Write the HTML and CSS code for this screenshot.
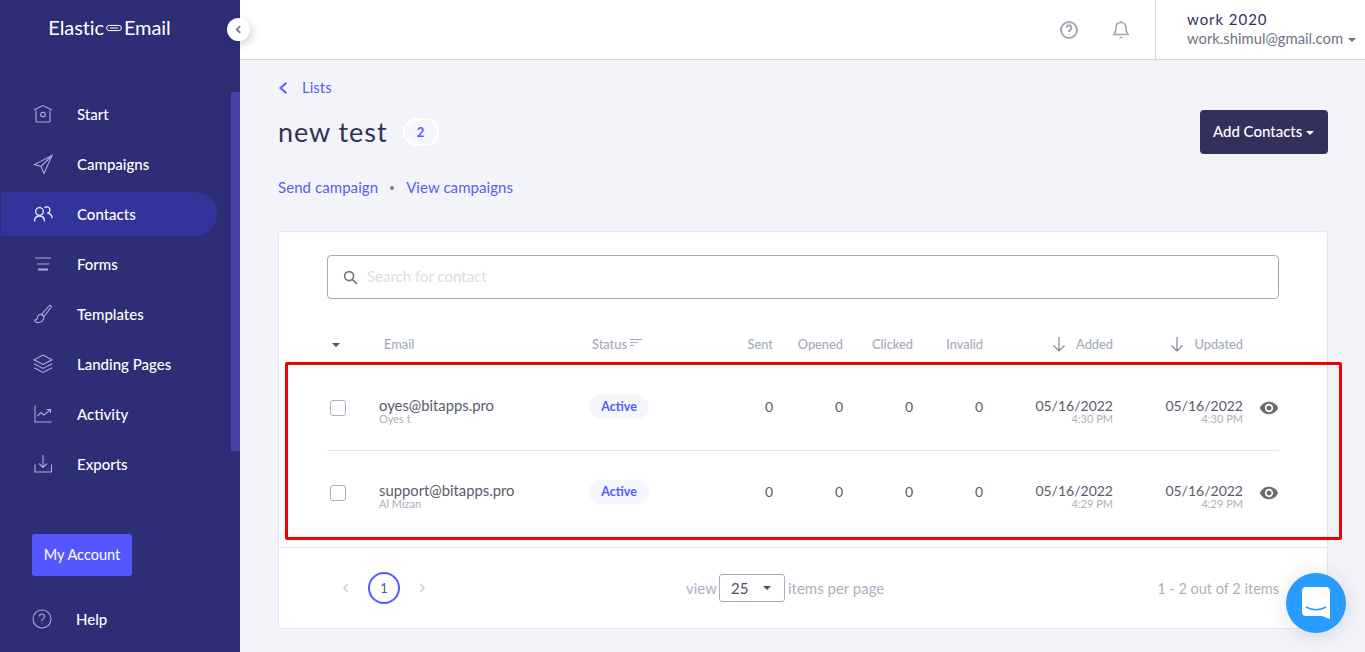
FILE: index.html
```html
<!DOCTYPE html>
<html>
<head>
    <title>new test - Contacts</title>
    <link rel="stylesheet" href="styles.css">
</head>
<body>

<aside class="sidebar">
    <div class="logo">Elastic<svg class="logo-mark" viewBox="0 0 16 8"><rect x="0.6" y="1.4" width="14.8" height="5.2" rx="2.6"/><path d="M4 4h8"/></svg>Email</div>
    <button class="collapse"><svg viewBox="0 0 10 10"><path d="M6.5 2 3.5 5l3 3"/></svg></button>
    <div class="side-scroll"></div>

    <nav class="nav">
        <a class="nav-item"><svg class="nav-icon" viewBox="0 0 20 20"><path d="M1 6 10 1.5 19 6"/><path d="M3 6.5V17a1 1 0 0 0 1 1h12a1 1 0 0 0 1-1V6.5"/><circle cx="10" cy="10.5" r="2.3"/></svg>Start</a>
        <a class="nav-item"><svg class="nav-icon" viewBox="0 0 20 20"><path d="M19 1.5 1.5 10.5 8 12.5 11 19.5Z"/><path d="M19 1.5 8 12.5"/></svg>Campaigns</a>
        <a class="nav-item active"><svg class="nav-icon" viewBox="0 0 20 20"><circle cx="6.500" cy="7.500" r="3.800"/><path d="M1.500 17.500c0-3.500 2-5.500 5-5.500s5 2 5 5.500"/><path d="M11.500 3.800a3.200 3.200 0 1 1 2.800 5.400c2.800.2 4.700 2.100 4.700 5.100"/></svg>Contacts</a>
        <a class="nav-item"><svg class="nav-icon" viewBox="0 0 20 20"><path d="M2 4h16M4 10h12"/><path class="thick" d="M5 15.500h10"/></svg>Forms</a>
        <a class="nav-item"><svg class="nav-icon" viewBox="0 0 20 20"><path d="M16.500 1.500c1-.6 2.300.6 1.700 1.700L11 12.500 8.500 10.500Z"/><path d="M8.500 10.500c-2-.5-4 .8-4 2.800 0 1.700-1.300 2.700-3 3 1 2 3.500 2.700 6 1.700 2-.8 3.500-2.700 3.500-5.500Z"/></svg>Templates</a>
        <a class="nav-item"><svg class="nav-icon" viewBox="0 0 20 20"><path d="M10 1 19 5.800 10 10.500 1 5.800Z"/><path d="M1 9.800 10 14.500 19 9.800"/><path d="M1 13.800 10 18.500 19 13.800"/></svg>Landing Pages</a>
        <a class="nav-item"><svg class="nav-icon" viewBox="0 0 20 20"><path d="M2 1.500V18h16.500"/><path d="M4.500 12 8 8.500l3 2.500 6-5"/><path d="M13.500 5.500H17.500V9"/></svg>Activity</a>
        <a class="nav-item"><svg class="nav-icon" viewBox="0 0 20 20"><path d="M10 1v12.500M6 9.500l4 4 4-4"/><path d="M2 10.500V18h16.500v-7.500"/></svg>Exports</a>
    </nav>

    <a class="account-btn">My Account</a>

    <a class="nav-item help"><svg class="nav-icon" viewBox="0 0 20 20"><circle cx="10" cy="10" r="9"/><path d="M7.500 7.500a2.500 2.500 0 1 1 3.800 2.100c-.8.500-1.300 1-1.300 2v.6"/><path d="M10 14.300v.5"/></svg>Help</a>
</aside>

<div class="main">
    <header class="topbar">
        <svg class="top-icon" viewBox="0 0 20 20"><circle cx="10" cy="10" r="8"/><path d="M7.600 7.800a2.400 2.400 0 1 1 3.700 2c-.8.500-1.300.9-1.300 1.800v.3"/><path d="M10 14.100v.5"/></svg>
        <svg class="top-icon bell" viewBox="0 0 20 20"><path d="M10 2.500c-3 0-5 2.200-5 5.500 0 3.800-.8 5-2 6.500h14c-1.200-1.500-2-2.700-2-6.500 0-3.300-2-5.500-5-5.500Z"/><path d="M8.500 17.500h3"/><path d="M10 1v1.500"/></svg>
        <div class="user">
            <div class="user-name">work 2020</div>
            <div class="user-mail">work.shimul@gmail.com <span class="caret"></span></div>
        </div>
    </header>

    <main class="content">
        <a class="back"><svg viewBox="0 0 10 12"><path d="M8.500 .8 2.500 6l6 5.200"/></svg>Lists</a>

        <div class="title-row">
            <h1>new test</h1>
            <span class="count">2</span>
            <button class="add-btn">Add Contacts <span class="caret"></span></button>
        </div>

        <div class="links">
            <a>Send campaign</a>
            <span class="dot"></span>
            <a>View campaigns</a>
        </div>

        <section class="card">
            <div class="card-body">
                <div class="search">
                    <svg viewBox="0 0 16 16"><circle cx="6.5" cy="6.5" r="4.8"/><path d="m10 10 5 5"/></svg>
                    <span>Search for contact</span>
                </div>

                <div class="row head">
                    <div><span class="caret dark"></span></div>
                    <div class="col-email">Email</div>
                    <div class="col-status">Status <svg class="sort" viewBox="0 0 12 8"><path d="M0 .5h12M0 3.500h8M0 6.500h4"/></svg></div>
                    <div class="num">Sent</div>
                    <div class="num">Opened</div>
                    <div class="num">Clicked</div>
                    <div class="num">Invalid</div>
                    <div class="num"><svg class="arrow" viewBox="0 0 14 16"><path d="M7 1v14M1.500 9.500 7 15l5.500-5.500"/></svg>Added</div>
                    <div class="num"><svg class="arrow" viewBox="0 0 14 16"><path d="M7 1v14M1.500 9.500 7 15l5.500-5.500"/></svg>Updated</div>
                    <div></div>
                </div>

                <div class="row contact">
                    <div><span class="check"></span></div>
                    <div class="stack"><div class="main-text email">oyes@bitapps.pro</div><div class="sub-text">Oyes t</div></div>
                    <div><span class="status">Active</span></div>
                    <div class="num main-text">0</div>
                    <div class="num main-text">0</div>
                    <div class="num main-text">0</div>
                    <div class="num main-text">0</div>
                    <div class="num stack"><div class="main-text">05/16/2022</div><div class="sub-text">4:30 PM</div></div>
                    <div class="num stack"><div class="main-text">05/16/2022</div><div class="sub-text">4:30 PM</div></div>
                    <div class="eye-cell"><svg class="eye" viewBox="0 0 24 24"><path d="M12 4.500C7 4.500 2.730 7.610 1 12c1.730 4.390 6 7.500 11 7.500s9.270-3.110 11-7.500c-1.730-4.390-6-7.500-11-7.500zM12 17c-2.760 0-5-2.240-5-5s2.240-5 5-5 5 2.240 5 5-2.240 5-5 5zm0-8c-1.660 0-3 1.340-3 3s1.340 3 3 3 3-1.340 3-3-1.340-3-3-3z"/></svg></div>
                </div>

                <div class="row contact">
                    <div><span class="check"></span></div>
                    <div class="stack"><div class="main-text email">support@bitapps.pro</div><div class="sub-text">Al Mizan</div></div>
                    <div><span class="status">Active</span></div>
                    <div class="num main-text">0</div>
                    <div class="num main-text">0</div>
                    <div class="num main-text">0</div>
                    <div class="num main-text">0</div>
                    <div class="num stack"><div class="main-text">05/16/2022</div><div class="sub-text">4:29 PM</div></div>
                    <div class="num stack"><div class="main-text">05/16/2022</div><div class="sub-text">4:29 PM</div></div>
                    <div class="eye-cell"><svg class="eye" viewBox="0 0 24 24"><path d="M12 4.500C7 4.500 2.730 7.610 1 12c1.730 4.390 6 7.500 11 7.500s9.270-3.110 11-7.500c-1.730-4.390-6-7.500-11-7.500zM12 17c-2.760 0-5-2.240-5-5s2.240-5 5-5 5 2.240 5 5-2.240 5-5 5zm0-8c-1.660 0-3 1.340-3 3s1.340 3 3 3 3-1.340 3-3-1.340-3-3-3z"/></svg></div>
                </div>
            </div>

            <div class="card-foot">
                <div class="pager">
                    <svg class="page-arrow" viewBox="0 0 8 12"><path d="M6 2 2 6l4 4"/></svg>
                    <span class="page-num">1</span>
                    <svg class="page-arrow" viewBox="0 0 8 12"><path d="m2 2 4 4-4 4"/></svg>
                </div>
                <div class="per-page">
                    <span>view</span>
                    <span class="select">25 <span class="caret dark"></span></span>
                    <span>items per page</span>
                </div>
                <div class="total">1 - 2 out of 2 items</div>
            </div>
        </section>
    </main>
</div>

<!-- annotation drawn over the screenshot -->
<div class="highlight"></div>

<div class="chat">
    <svg viewBox="0 0 28 32"><path fill="#fff" d="M4 0h20a4 4 0 0 1 4 4v28l-8-3H4a4 4 0 0 1-4-4V4a4 4 0 0 1 4-4Z"/><path class="smile" d="M4 20c6 3.500 14 3.500 20 0"/></svg>
</div>

</body>
</html>
```

FILE: styles.css
```css
* {
    box-sizing: border-box;
}

html, body {
    height: 100%;
}

body {
    margin: 0;
    display: flex;
    overflow: hidden;
    background-color: #f3f4f9;
    font-family: "Lato", "Open Sans", sans-serif;
    color: #33305c;
}

svg {
    display: block;
    fill: none;
    stroke: currentColor;
}

/* Caret used by dropdowns */
.caret {
    display: inline-block;
    width: 0;
    height: 0;
    border-left: 4px solid transparent;
    border-right: 4px solid transparent;
    border-top: 4px solid currentColor;
    vertical-align: middle;
}

.caret.dark {
    color: #4a5068;
}

/* Sidebar */
.sidebar {
    position: relative;
    z-index: 2;
    flex: 0 0 240px;
    height: 652px;
    background-color: #2d2e76;
    color: #fff;
}

.logo {
    display: flex;
    align-items: center;
    justify-content: center;
    height: 57px;
    padding: 0 21px 4px 0;
    font-size: 20px;
    font-weight: 400;
    letter-spacing: -0.1px;
}

.logo-mark {
    width: 16px;
    height: 8px;
    margin: 2px 2px 0;
    stroke-width: 1;
}

.collapse {
    position: absolute;
    top: 18px;
    left: 227px;
    width: 23px;
    height: 23px;
    padding: 6px;
    border: none;
    border-radius: 50%;
    background-color: #fff;
    color: #6c7189;
    box-shadow: 2px 3px 8px rgba(30, 30, 60, 0.2);
}

.collapse svg {
    stroke-width: 1.6;
}

.side-scroll {
    position: absolute;
    top: 92px;
    right: 0;
    width: 9px;
    height: 359px;
    background-color: #4543a8;
}

.nav {
    padding-top: 32px;
}

.nav-item {
    display: flex;
    align-items: center;
    gap: 24px;
    height: 50px;
    padding: 0 0 1px 33px;
    font-size: 15px;
    font-weight: 500;
}

.nav-item.active {
    position: relative;
    isolation: isolate;
}

.nav-item.active::before {
    content: "";
    position: absolute;
    z-index: -1;
    top: 3px;
    left: 1px;
    width: 216px;
    height: 44px;
    border-radius: 0 22px 22px 0;
    background-color: #33349b;
}

.nav-icon {
    flex: 0 0 20px;
    width: 20px;
    height: 20px;
    margin-top: 1px;
    color: #a9abe6;
    stroke-width: 1.1;
}

.nav-icon .thick {
    stroke-width: 2;
}

.nav-item.active .nav-icon {
    color: #eeeefc;
    stroke-width: 1.3;
}

.account-btn {
    display: flex;
    align-items: center;
    justify-content: center;
    width: 100px;
    height: 42px;
    margin: 45px 0 0 32px;
    padding-bottom: 2px;
    border-radius: 3px;
    background-color: #5457ff;
    font-size: 14.5px;
}

.nav-item.help {
    margin-top: 18px;
    padding-left: 32px;
}

/* Top bar */
.main {
    flex: 1;
    min-width: 0;
}

.topbar {
    display: flex;
    align-items: center;
    height: 60px;
    padding-right: 8px;
    border-bottom: 1px solid #d6d8de;
    background-color: #fff;
}

.top-icon {
    width: 20px;
    height: 20px;
    margin-left: 819px;
    color: #a3a7b4;
    stroke-width: 2;
}

.top-icon.bell {
    margin-left: 32px;
    stroke-width: 1.6;
}

.user {
    align-self: stretch;
    margin-left: 24px;
    padding: 10px 0 0 31px;
    border-left: 1px solid #d6d8de;
}

.user-name {
    font-size: 15px;
    line-height: 19px;
    letter-spacing: 0.95px;
}

.user-mail {
    font-size: 14.8px;
    line-height: 19px;
    color: #70747f;
    white-space: nowrap;
}

.user-mail .caret {
    margin-left: 1px;
}

/* Page content */
.content {
    padding: 18px 37px 0 38px;
}

.back {
    display: flex;
    align-items: center;
    height: 20px;
    padding-bottom: 2px;
    font-size: 15px;
    color: #5c5cf5;
}

.back svg {
    width: 10px;
    height: 12px;
    margin: 2px 14px 0 0;
    stroke-width: 2;
}

.title-row {
    display: flex;
    align-items: center;
    height: 44px;
    margin-top: 12px;
}

h1 {
    margin: 0;
    padding-bottom: 2px;
    font-size: 27px;
    font-weight: 400;
    letter-spacing: 0.95px;
}

.count {
    display: flex;
    align-items: center;
    justify-content: center;
    width: 36px;
    height: 28px;
    margin-left: 15px;
    border: 2px solid #fff;
    border-radius: 14px;
    background-color: #f5f7fc;
    color: #5457ff;
    font-size: 13px;
    font-weight: 700;
}

.add-btn {
    width: 128px;
    height: 44px;
    margin-left: auto;
    padding: 0 1px 2px 0;
    border: none;
    border-radius: 4px;
    background-color: #33305c;
    color: #fff;
    font-family: inherit;
    font-size: 15px;
    font-weight: 500;
}

.links {
    display: flex;
    align-items: center;
    height: 20px;
    margin-top: 24px;
    padding-bottom: 2px;
    font-size: 15px;
    letter-spacing: 0.07px;
    color: #5c5cf5;
}

.dot {
    width: 4px;
    height: 4px;
    margin: 2px 12px 0;
    border-radius: 50%;
    background-color: #7c8094;
}

/* Card */
.card {
    height: 398px;
    margin-top: 33px;
    border: 1px solid #e4e6ee;
    border-radius: 3px;
    background-color: #fff;
}

.card-body {
    height: 316px;
    padding: 23px 48px 0;
    border-bottom: 1px solid #e4e6ee;
}

.search {
    display: flex;
    align-items: center;
    height: 44px;
    padding: 0 0 2px 15px;
    border: 1px solid #9fa9ba;
    border-radius: 4px;
    font-size: 15px;
    color: #d9dce6;
}

.search svg {
    width: 15px;
    height: 15px;
    margin: 2px 9px 0 0;
    color: #6d7688;
    stroke-width: 1.7;
}

.row {
    display: grid;
    grid-template-columns: 52px 210px 100px 84px 70px 70px 70px 130px 130px 36px;
    align-items: center;
}

.head {
    height: 66px;
    padding-top: 24px;
    border-bottom: 1px solid #e4e6ee;
    font-size: 12.8px;
    font-weight: 500;
    color: #a3abba;
}

.head .caret {
    margin-left: 5px;
}

.col-email {
    padding-left: 5px;
}

.col-status {
    display: flex;
    align-items: center;
    gap: 3px;
    padding-left: 3px;
}

.sort {
    width: 12px;
    height: 8px;
    margin-top: -1px;
    stroke-width: 1;
}

.num {
    text-align: right;
}

.head .num {
    display: flex;
    justify-content: flex-end;
    align-items: center;
}

.arrow {
    width: 14px;
    height: 16px;
    margin-right: 10px;
    color: #7d8697;
    stroke-width: 1.2;
}

.contact {
    height: 85px;
    padding-bottom: 2px;
}

.contact + .contact {
    padding-bottom: 3px;
    border-top: 1px solid #e4e6ee;
}

.stack {
    padding-top: 8px;
}

.main-text {
    font-size: 14px;
    line-height: 15px;
    color: #575c6b;
}

.main-text.email {
    font-size: 14.8px;
}

.sub-text {
    font-size: 11px;
    line-height: 11px;
    color: #a9b1be;
}

.check {
    display: block;
    width: 16px;
    height: 16px;
    margin: 2px 0 0 3px;
    border: 1px solid #a5b0c4;
    border-radius: 3px;
}

.status {
    display: inline-flex;
    align-items: center;
    justify-content: center;
    width: 60px;
    height: 24px;
    border-radius: 12px;
    background-color: #f4f7fc;
    color: #5457ff;
    font-size: 12.5px;
    font-weight: 700;
}

.eye-cell {
    display: flex;
    justify-content: flex-end;
    padding-top: 2px;
}

.eye {
    width: 20px;
    height: 20px;
    fill: #6b6b6b;
    stroke: none;
}

/* Card footer */
.card-foot {
    display: grid;
    grid-template-columns: 407px auto 1fr;
    align-items: center;
    height: 80px;
    padding-right: 48px;
    font-size: 15px;
    color: #a9b1be;
}

.pager {
    display: flex;
    align-items: center;
    padding-left: 63px;
}

.page-arrow {
    width: 8px;
    height: 12px;
    color: #ccd1db;
    stroke-width: 1.5;
}

.page-num {
    display: flex;
    align-items: center;
    justify-content: center;
    width: 32px;
    height: 32px;
    margin: 0 18px;
    border: 2px solid #5457ff;
    border-radius: 50%;
    color: #575c6b;
    font-size: 13px;
}

.per-page {
    display: flex;
    align-items: center;
    gap: 2px;
}

.select {
    display: flex;
    align-items: center;
    justify-content: space-between;
    width: 66px;
    height: 28px;
    margin-right: 1px;
    padding: 0 13px 0 11px;
    border: 1px solid #a5b0c4;
    border-radius: 3px;
    color: #4a5068;
}

.total {
    font-size: 14.5px;
    text-align: right;
}

/* Red box over the two rows */
.highlight {
    position: absolute;
    z-index: 3;
    top: 362px;
    left: 285px;
    width: 1057px;
    height: 178px;
    border: 3px solid #f00000;
    border-radius: 2px;
}

/* Chat bubble */
.chat {
    position: fixed;
    z-index: 4;
    top: 573px;
    left: 1286px;
    display: flex;
    align-items: center;
    justify-content: center;
    width: 60px;
    height: 60px;
    border-radius: 50%;
    background-color: #2a9bff;
    box-shadow: 0 2px 20px rgba(30, 40, 70, 0.15);
}

.chat svg {
    width: 28px;
    height: 32px;
    stroke: none;
}

.chat .smile {
    fill: none;
    stroke: #2a9bff;
    stroke-width: 1.5;
}
```
